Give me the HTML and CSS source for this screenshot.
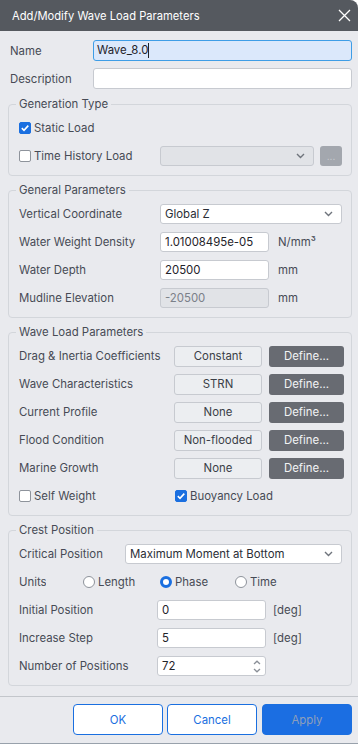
FILE: index.html
```html
<!DOCTYPE html>
<html>
<head>
<meta charset="utf-8">
<link rel="stylesheet" href="styles.css">
</head>
<body>
<div class="dialog">
  <div class="titlebar">
    <span class="title">Add/Modify Wave Load Parameters</span>
    <svg class="close" width="13" height="13" viewBox="0 0 13 13"><path d="M1 1L12 12M12 1L1 12" stroke="#fff" stroke-width="1.3" fill="none"/></svg>
  </div>
  <div class="content">
    <div class="top-row"><span class="top-label">Name</span><div class="field name-field"><span class="caret">Wave_8.0</span></div></div>
    <div class="top-row"><span class="top-label">Description</span><div class="field"></div></div>

    <fieldset class="group">
      <legend>Generation Type</legend>
      <div class="row"><span class="check on"><svg width="10" height="10" viewBox="0 0 10 10"><path d="M1.8 5.2L4 7.3L8.3 2.6" stroke="#fff" stroke-width="1.6" fill="none"/></svg></span><span>Static Load</span></div>
      <div class="row">
        <div class="chk-col"><span class="check"></span><span>Time History Load</span></div>
        <div class="select disabled"><span></span><svg class="chev" width="9" height="6" viewBox="0 0 9 6"><path d="M1 1L4.5 4.5L8 1" stroke="#6f747c" stroke-width="1.4" fill="none"/></svg></div>
        <div class="dots">...</div>
      </div>
    </fieldset>

    <fieldset class="group">
      <legend>General Parameters</legend>
      <div class="row"><span class="lbl gp">Vertical Coordinate</span><div class="select"><span>Global Z</span><svg class="chev" width="9" height="6" viewBox="0 0 9 6"><path d="M1 1L4.5 4.5L8 1" stroke="#6f747c" stroke-width="1.4" fill="none"/></svg></div></div>
      <div class="row"><span class="lbl gp">Water Weight Density</span><div class="input">1.01008495e-05</div><span class="unit">N/mm³</span></div>
      <div class="row"><span class="lbl gp">Water Depth</span><div class="input">20500</div><span class="unit">mm</span></div>
      <div class="row"><span class="lbl gp">Mudline Elevation</span><div class="input disabled">-20500</div><span class="unit">mm</span></div>
    </fieldset>

    <fieldset class="group">
      <legend>Wave Load Parameters</legend>
      <div class="row"><span class="lbl wp">Drag &amp; Inertia Coefficients</span><div class="value">Constant</div><div class="define">Define...</div></div>
      <div class="row"><span class="lbl wp">Wave Characteristics</span><div class="value">STRN</div><div class="define">Define...</div></div>
      <div class="row"><span class="lbl wp">Current Profile</span><div class="value">None</div><div class="define">Define...</div></div>
      <div class="row"><span class="lbl wp">Flood Condition</span><div class="value">Non-flooded</div><div class="define">Define...</div></div>
      <div class="row"><span class="lbl wp">Marine Growth</span><div class="value">None</div><div class="define">Define...</div></div>
      <div class="row">
        <div class="chk-col wide"><span class="check"></span><span>Self Weight</span></div>
        <span class="check on"><svg width="10" height="10" viewBox="0 0 10 10"><path d="M1.8 5.2L4 7.3L8.3 2.6" stroke="#fff" stroke-width="1.6" fill="none"/></svg></span><span>Buoyancy Load</span>
      </div>
    </fieldset>

    <fieldset class="group">
      <legend>Crest Position</legend>
      <div class="row"><span class="lbl cp">Critical Position</span><div class="select"><span>Maximum Moment at Bottom</span><svg class="chev" width="9" height="6" viewBox="0 0 9 6"><path d="M1 1L4.5 4.5L8 1" stroke="#6f747c" stroke-width="1.4" fill="none"/></svg></div></div>
      <div class="row">
        <span class="lbl units">Units</span>
        <div class="radio-opt r1"><span class="radio"></span><span>Length</span></div>
        <div class="radio-opt r2"><span class="radio on"></span><span>Phase</span></div>
        <div class="radio-opt"><span class="radio"></span><span>Time</span></div>
      </div>
      <div class="row"><span class="lbl ci">Initial Position</span><div class="input">0</div><span class="unit u2">[deg]</span></div>
      <div class="row"><span class="lbl ci">Increase Step</span><div class="input">5</div><span class="unit u2">[deg]</span></div>
      <div class="row"><span class="lbl ci">Number of Positions</span><div class="input spin"><span>72</span><span class="spinbtns"><svg width="8" height="5" viewBox="0 0 8 5"><path d="M1 4L4 1.2L7 4" stroke="#8a8f97" stroke-width="1.3" fill="none"/></svg><svg width="8" height="5" viewBox="0 0 8 5"><path d="M1 1L4 3.8L7 1" stroke="#8a8f97" stroke-width="1.3" fill="none"/></svg></span></div></div>
    </fieldset>
  </div>
  <div class="footer">
    <div class="btn">OK</div>
    <div class="btn">Cancel</div>
    <div class="btn primary">Apply</div>
  </div>
</div>
</body>
</html>
```
FILE: styles.css
```css
body {
  margin: 0;
  background: #ffffff;
  font-family: Inter, "Noto Sans", sans-serif;
  font-size: 11.4px;
  color: #474b55;
}
.dialog {
  width: 358px;
  height: 743px;
  background: #e9eaee;
  border-top-right-radius: 8px;
  border-bottom: 1px solid #98a1ab;
  display: flex;
  flex-direction: column;
}
.titlebar {
  height: 31px;
  flex: none;
  background: #55595f;
  border-top-right-radius: 8px;
  display: flex;
  align-items: center;
  justify-content: space-between;
  padding: 0 7px 0 12px;
  color: #ffffff;
  font-size: 11.2px;
}
.content {
  flex: 1;
  padding: 9px 6px 0 8px;
  display: flex;
  flex-direction: column;
}
.top-row {
  display: flex;
  align-items: center;
  height: 21px;
  margin-bottom: 7px;
  padding-left: 2px;
}
.top-label {
  width: 83px;
  flex: none;
}
.field {
  flex: 1;
  height: 21px;
  box-sizing: border-box;
  background: #ffffff;
  border: 1px solid #c7cad0;
  border-radius: 3px;
  display: flex;
  align-items: center;
  padding-left: 3px;
  color: #1f232a;
}
.name-field {
  background: #dbe8fb;
  border-color: #3e9de6;
}
.caret {
  border-right: 1px solid #1f232a;
  line-height: 15px;
}
.group {
  margin: 0 0 6px;
  border: 1px solid #d3d6db;
  border-radius: 4px;
  padding: 6px 9px 9px 10px;
  display: flex;
  flex-direction: column;
  gap: 8px;
  min-width: 0;
}
.group legend {
  padding: 0 3px;
  margin-left: -3px;
  line-height: 16px;
  color: #474b55;
}
.row {
  display: flex;
  align-items: center;
  height: 20px;
}
.check {
  width: 12px;
  height: 12px;
  flex: none;
  box-sizing: border-box;
  border: 1px solid #8e939b;
  border-radius: 2px;
  background: #ffffff;
  margin-right: 3px;
  display: flex;
  align-items: center;
  justify-content: center;
}
.check.on {
  background: #1a6fe0;
  border-color: #1a6fe0;
}
.chk-col {
  width: 141px;
  flex: none;
  display: flex;
  align-items: center;
}
.chk-col.wide {
  width: 156px;
}
.select {
  flex: 1;
  height: 20px;
  box-sizing: border-box;
  background: #ffffff;
  border: 1px solid #c7cad0;
  border-radius: 3px;
  display: flex;
  align-items: center;
  justify-content: space-between;
  padding: 0 8px 0 4px;
  color: #2a2e36;
}
.select.disabled {
  background: #e1e3e7;
}
.dots {
  width: 22px;
  height: 20px;
  flex: none;
  margin-left: 6px;
  background: #a3a7ae;
  border-radius: 3px;
  color: #c9ccd1;
  font-size: 10px;
  display: flex;
  align-items: center;
  justify-content: center;
  line-height: 1;
}
.lbl {
  flex: none;
}
.lbl.gp { width: 141px; }
.lbl.wp { width: 155px; }
.lbl.cp { width: 106px; }
.lbl.ci { width: 138px; }
.lbl.units {
  width: 27px;
  overflow: hidden;
  white-space: nowrap;
  margin-right: 37px;
}
.input {
  width: 109px;
  height: 20px;
  flex: none;
  box-sizing: border-box;
  background: #ffffff;
  border: 1px solid #c7cad0;
  border-radius: 3px;
  display: flex;
  align-items: center;
  padding-left: 4px;
  color: #1f232a;
}
.input.disabled {
  background: #e1e3e7;
  color: #7b8089;
}
.input.spin {
  justify-content: space-between;
  padding-right: 4px;
}
.spinbtns {
  display: flex;
  flex-direction: column;
  gap: 3px;
}
.spinbtns svg { display: block; }
.unit {
  margin-left: 9px;
}
.unit.u2 {
  margin-left: 7px;
}
.value {
  width: 88px;
  height: 21px;
  flex: none;
  box-sizing: border-box;
  border: 1px solid #c7cad0;
  border-radius: 3px;
  background: #eceef1;
  display: flex;
  align-items: center;
  justify-content: center;
  color: #3a3e47;
}
.define {
  width: 75px;
  height: 21px;
  flex: none;
  margin-left: 7px;
  border-radius: 3px;
  background: #686b72;
  color: #f2f3f5;
  display: flex;
  align-items: center;
  justify-content: center;
}
.radio-opt {
  display: flex;
  align-items: center;
  gap: 3px;
}
.radio-opt.r1 { width: 77px; }
.radio-opt.r2 { width: 75px; }
.radio {
  width: 12px;
  height: 12px;
  box-sizing: border-box;
  border: 1px solid #8e939b;
  border-radius: 50%;
  background: #ffffff;
  flex: none;
}
.radio.on {
  border: 3.5px solid #1a6fe0;
}
.footer {
  flex: none;
  border-top: 1px solid #c3c6cb;
  padding: 7px 6px 8px 73px;
  display: flex;
  gap: 4px;
}
.btn {
  width: 90px;
  height: 31px;
  box-sizing: border-box;
  border: 1px solid #1a6fe0;
  border-radius: 4px;
  background: #ffffff;
  color: #1a6fe0;
  display: flex;
  align-items: center;
  justify-content: center;
}
.btn.primary {
  background: #1b6ee2;
  color: #8e9fba;
  margin-left: 1px;
}
```
